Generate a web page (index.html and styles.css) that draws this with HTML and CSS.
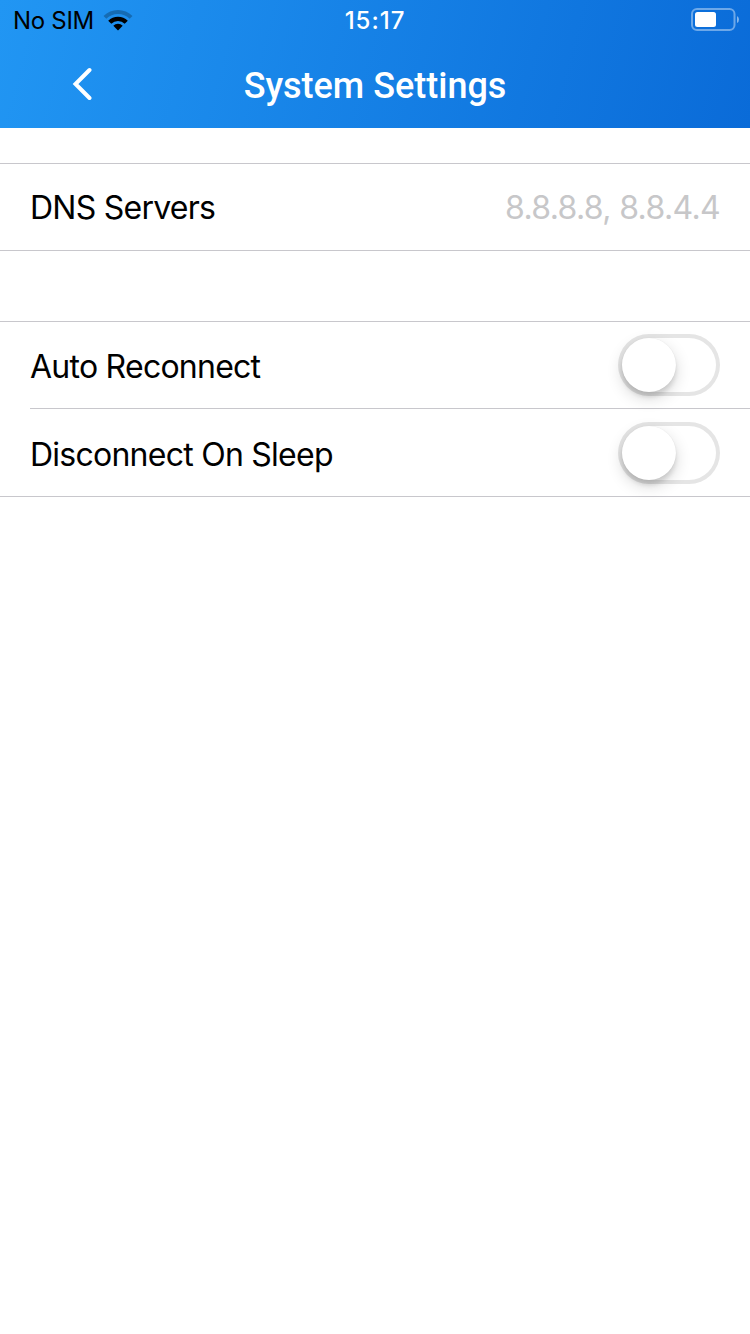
FILE: index.html
```
<!DOCTYPE html>
<html lang="en">
<head>
    <meta charset="UTF-8">
    <meta name="viewport" content="width=device-width, initial-scale=1.0">
    <title>System Settings</title>
    <link rel="stylesheet" href="styles.css">
</head>
<body>
    <header class="header">
        <div class="status-bar">
            <div class="carrier">
                <span>No SIM</span>
                <svg class="wifi" width="30" height="22" viewBox="-15 -21.5 30 22">
                    <path d="M-14.5 -14.5A20.5 20.5 0 0 1 14.5 -14.5L11.7 -11.7A16.5 16.5 0 0 0 -11.7 -11.7Z" opacity="0.25"/>
                    <path d="M-9.8 -9.8A13.9 13.9 0 0 1 9.8 -9.8L6.7 -6.7A9.5 9.5 0 0 0 -6.7 -6.7Z"/>
                    <path d="M-4.7 -4.7A6.6 6.6 0 0 1 4.7 -4.7L0 0Z"/>
                </svg>
            </div>
            <div class="clock">15:17</div>
            <svg class="battery" width="48" height="24" viewBox="0 0 48 24">
                <rect x="1" y="1" width="42.5" height="21" rx="5" fill="none" stroke="#fff" stroke-width="2" opacity="0.4"/>
                <rect x="4" y="4" width="21" height="15" rx="2.5" fill="#fff"/>
                <path d="M46 8q2 1 2 3.5t-2 3.5z" fill="#fff" opacity="0.5"/>
            </svg>
        </div>
        <div class="nav-bar">
            <svg class="back" width="20" height="34" viewBox="0 0 20 34">
                <path d="M17.5 3L3.5 17L17.5 31" fill="none" stroke="#fff" stroke-width="4" stroke-linecap="round"/>
            </svg>
            <h1 class="title">System Settings</h1>
        </div>
    </header>

    <main>
        <div class="group">
            <div class="row">
                <span class="label">DNS Servers</span>
                <span class="value">8.8.8.8, 8.8.4.4</span>
            </div>
        </div>
        <div class="group toggles">
            <div class="row">
                <span class="label">Auto Reconnect</span>
                <div class="switch"><div class="knob"></div></div>
            </div>
            <div class="divider"></div>
            <div class="row">
                <span class="label">Disconnect On Sleep</span>
                <div class="switch"><div class="knob"></div></div>
            </div>
        </div>
    </main>
</body>
</html>
```

FILE: styles.css
```
* {
    box-sizing: border-box;
}

body {
    margin: 0;
    min-height: 1334px;
    background: #fff;
    font-family: Inter, "Liberation Sans", sans-serif;
    color: #000;
}

.header {
    height: 128px;
    background: linear-gradient(105deg, #2196f3, #0a6bd8);
}

.status-bar {
    display: grid;
    grid-template-columns: 1fr auto 1fr;
    height: 40px;
    padding: 0 11px 0 13px;
    align-items: center;
    font-size: 24px;
}

.carrier {
    display: flex;
    align-items: center;
    gap: 9px;
    letter-spacing: -0.3px;
}

.clock {
    margin-left: -2px;
    color: #fff;
    font-weight: 500;
    letter-spacing: 1px;
}

.battery {
    justify-self: end;
}

.nav-bar {
    display: grid;
    grid-template-columns: 1fr auto 1fr;
    align-items: center;
    height: 88px;
}

.back {
    margin-left: 72px;
}

.title {
    margin: 0;
    padding-top: 4px;
    color: #fff;
    font-family: Roboto, sans-serif;
    font-size: 36px;
    font-weight: 500;
}

.group {
    margin-top: 35px;
    border-top: 1px solid #c8c7cc;
    border-bottom: 1px solid #c8c7cc;
}

.toggles {
    margin-top: 70px;
}

.row {
    display: flex;
    align-items: center;
    justify-content: space-between;
    height: 86px;
    padding: 0 30px;
    font-size: 32px;
    letter-spacing: -0.75px;
}

.toggles .row:last-child {
    height: 87px;
}

.toggles .label {
    padding-top: 2px;
}

.toggles .row:last-child .label {
    padding-top: 3px;
}

.value {
    color: #c7c7c9;
    letter-spacing: -0.65px;
}

.divider {
    height: 1px;
    margin-left: 30px;
    background: #c8c7cc;
}

.switch {
    width: 102px;
    height: 62px;
    padding: 4px;
    border-radius: 31px;
    box-shadow: inset 0 0 0 4px #e5e5e5;
}

.knob {
    width: 54px;
    height: 54px;
    border-radius: 50%;
    background: #fff;
    box-shadow: 0 6px 16px rgba(0, 0, 0, 0.16), 0 5px 4px rgba(0, 0, 0, 0.1), 0 0 1px rgba(0, 0, 0, 0.1);
}
```
